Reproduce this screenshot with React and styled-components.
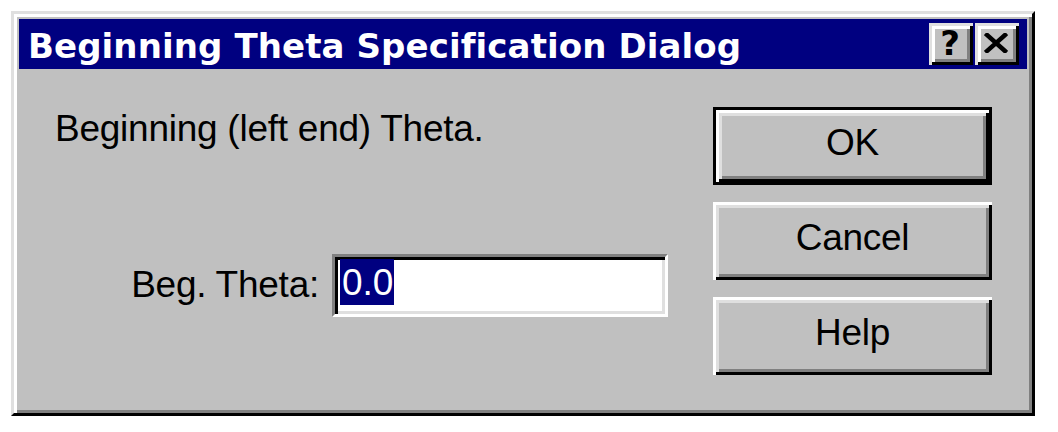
import React from 'react';
import styled, { createGlobalStyle } from 'styled-components';

const GlobalStyle = createGlobalStyle`
  html, body {
    margin: 0;
    padding: 0;
    background: #ffffff;
  }
  * {
    box-sizing: border-box;
  }
`;

const Page = styled.div`
  padding: 11px;
  width: 1058px;
  height: 432px;
`;

// outer window frame, win95 style bevel
const Window = styled.div`
  width: 1024px;
  height: 405px;
  background: #c0c0c0;
  border: 3px solid;
  border-color: #dfdfdf #000000 #000000 #dfdfdf;
  box-shadow: inset 3px 3px #ffffff, inset -3px -3px #808080;
  padding: 5px;
  display: flex;
  flex-direction: column;
`;

const TitleBar = styled.div`
  height: 50px;
  background: #000080;
  display: flex;
  align-items: center;
  justify-content: space-between;
  padding: 0 8px 0 9px;
`;

const Title = styled.div`
  color: #ffffff;
  font-family: "DejaVu Sans", "Liberation Sans", sans-serif;
  font-weight: bold;
  font-size: 34px;
  letter-spacing: 0.1px;
  padding-top: 3px;
  white-space: nowrap;
`;

const CaptionButtons = styled.div`
  display: flex;
  gap: 2px;
`;

const CaptionButton = styled.div`
  width: 44px;
  height: 42px;
  background: #c0c0c0;
  box-shadow: inset 3px 3px #dfdfdf, inset -3px -3px #000000,
    inset 6px 6px #ffffff, inset -6px -6px #808080;
  display: flex;
  align-items: center;
  justify-content: center;
  color: #000000;
  font-family: "DejaVu Sans", "Liberation Sans", sans-serif;
  font-weight: bold;
  font-size: 34px;
  padding: 0 2px 2px 0;
`;

const Body = styled.div`
  flex: 1;
  display: grid;
  grid-template-columns: 1fr 279px;
  column-gap: 45px;
  padding: 38px 35px 0 36px;
  font-family: "Liberation Sans", Arial, sans-serif;
  font-size: 37px;
  letter-spacing: -0.25px;
  color: #000000;
`;

const LeftColumn = styled.div`
  display: flex;
  flex-direction: column;
`;

const Message = styled.div`
  line-height: 42px;
  padding-top: 1px;
  white-space: nowrap;
`;

const FieldRow = styled.div`
  margin-top: 104px;
  display: flex;
  align-items: center;
  justify-content: flex-end;
  gap: 13px;
`;

const Label = styled.div`
  white-space: nowrap;
  padding-bottom: 1px;
`;

const Field = styled.div`
  width: 336px;
  height: 63px;
  background: #ffffff;
  border: 3px solid;
  border-color: #808080 #ffffff #ffffff #808080;
  box-shadow: inset 3px 3px #000000, inset -3px -3px #dfdfdf;
  padding: 2px 5px;
  display: flex;
  align-items: flex-start;
`;

const Selected = styled.span`
  background: #000080;
  color: #ffffff;
  line-height: 44px;
  padding: 2px 1px 0 2px;
  letter-spacing: 0;
`;

const ButtonColumn = styled.div`
  display: flex;
  flex-direction: column;
  gap: 17px;
`;

const Button = styled.div`
  height: 78px;
  background: #c0c0c0;
  display: flex;
  align-items: center;
  justify-content: center;
  padding-bottom: 6px;
  border: ${p => (p.$default ? '3px solid #000000' : 'none')};
  box-shadow: inset 3px 3px #ffffff, inset -3px -3px #000000,
    inset 6px 6px #dfdfdf, inset -6px -6px #808080;
`;

function CloseGlyph() {
  return (
    <svg width="24" height="20" viewBox="0 0 24 20">
      <path d="M3 2 L21 18 M21 2 L3 18" stroke="#000" strokeWidth="4.5" strokeLinecap="square" fill="none" />
    </svg>
  );
}

export default function App() {
  return (
    <Page>
      <GlobalStyle />
      <Window>
        <TitleBar>
          <Title>Beginning Theta Specification Dialog</Title>
          <CaptionButtons>
            <CaptionButton>?</CaptionButton>
            <CaptionButton><CloseGlyph /></CaptionButton>
          </CaptionButtons>
        </TitleBar>
        <Body>
          <LeftColumn>
            <Message>Beginning (left end) Theta.</Message>
            <FieldRow>
              <Label>Beg. Theta:</Label>
              <Field>
                <Selected>0.0</Selected>
              </Field>
            </FieldRow>
          </LeftColumn>
          <ButtonColumn>
            <Button $default>OK</Button>
            <Button>Cancel</Button>
            <Button>Help</Button>
          </ButtonColumn>
        </Body>
      </Window>
    </Page>
  );
}
